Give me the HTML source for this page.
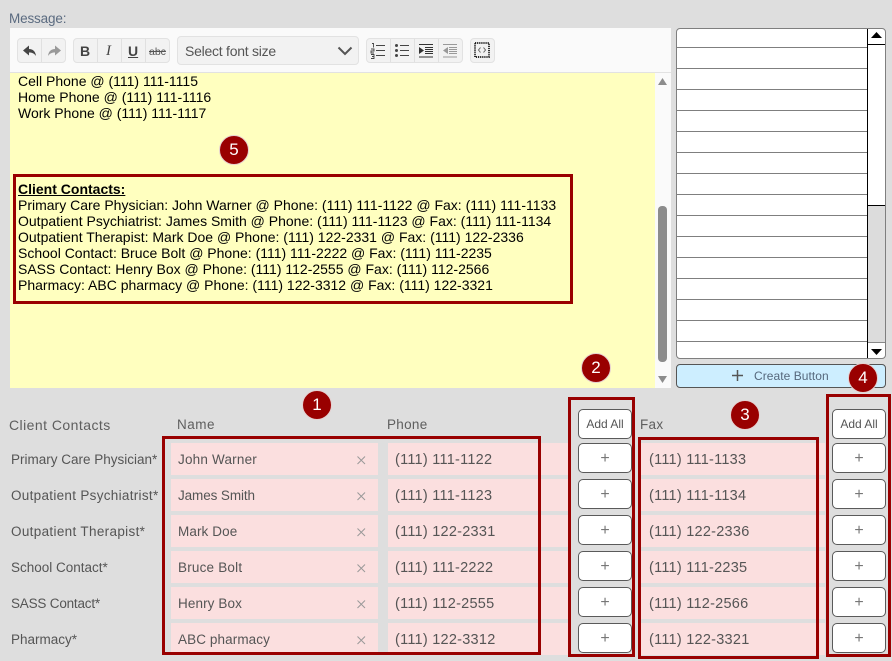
<!DOCTYPE html>
<html><head><meta charset="utf-8"><style>
html,body{margin:0;padding:0;width:892px;height:661px;overflow:hidden;background:#dedede}
body{position:relative;font-family:"Liberation Sans",sans-serif;color:#555}
div,span,svg{position:absolute;box-sizing:border-box;white-space:nowrap}
.t{font-size:13.5px;line-height:16px;color:#555}
.ph{font-size:14.5px;letter-spacing:.25px}
.pink{background:#fbdfdf;height:32px}
.btn{background:#fff;border:1px solid #5a5a5a;border-radius:5px;width:54px;height:30px;text-align:center;font-size:12px;line-height:28px;color:#555}
.pl{font-size:16px;line-height:30px;color:#777}
.red{border:3.5px solid #990000}
.c{width:30px;height:30px;border-radius:50%;background:#990000;border:1px solid #e6d0d0;color:#fff;text-align:center;font-size:17px;line-height:28px}
.m{font-size:14px;line-height:16px;color:#000;left:18px}
.grp{background:#f2f2f2;border:1px solid #e2e2e2;border-radius:4px;height:25px;top:38px}
.sep{width:1px;background:#e0e0e0;top:0;height:23px}
.hl{left:677px;width:190px;height:1px;background:#7f7f7f}
.x{left:357px}
</style></head><body>

<div class="t" style="left:9px;top:11px;color:#5b6b80;letter-spacing:-.15px">Message:</div>

<div style="left:10px;top:28px;width:661px;height:360px;background:#fafafa"></div>
<div style="left:10px;top:72px;width:661px;height:1px;background:#e2e2e2"></div>
<div style="left:10px;top:73px;width:645px;height:315px;background:#ffffbf"></div>

<div class="grp" style="left:17px;width:49px"><div class="sep" style="left:23px"></div>
<svg style="left:4px;top:4px" width="16" height="16" viewBox="0 0 16 16"><path d="M7 2.500L1 7.500l6 5V9.500c3 0 5 .7 7 3.500-.5-4.500-3-7-7-7z" fill="#444"/></svg>
<svg style="left:28px;top:4px" width="16" height="16" viewBox="0 0 16 16"><path d="M9 2.500l6 5-6 5V9.500c-3 0-5 .7-7 3.500 .5-4.500 3-7 7-7z" fill="#999"/></svg></div>

<div class="grp" style="left:73px;width:97px"><div class="sep" style="left:23px"></div><div class="sep" style="left:47px"></div><div class="sep" style="left:71px"></div>
<div style="left:6px;top:4px;font:bold 14px/16px 'Liberation Sans',sans-serif;color:#444">B</div>
<div style="left:32px;top:4px;font:italic 15px/16px 'Liberation Serif',serif;color:#444">I</div>
<div style="left:54px;top:4px;font:bold 14px/16px 'Liberation Sans',sans-serif;color:#444;text-decoration:underline">U</div>
<div style="left:75px;top:5px;font:10.500px/16px 'Liberation Sans',sans-serif;color:#555;text-decoration:line-through">abc</div></div>

<div style="left:177px;top:36px;width:182px;height:29px;background:#f2f2f2;border:1px solid #e2e2e2;border-radius:4px"></div>
<div class="t" style="left:185px;top:43px;font-size:14px;letter-spacing:-.25px;color:#555">Select font size</div>
<svg style="left:337px;top:46px" width="16" height="10" viewBox="0 0 16 10"><path d="M1.500 1.500L8 8l6.500-6.500" fill="none" stroke="#555" stroke-width="2"/></svg>

<div class="grp" style="left:366px;width:97px"><div class="sep" style="left:23px"></div><div class="sep" style="left:47px"></div><div class="sep" style="left:71px"></div>
<svg style="left:3px;top:3px" width="18" height="18" viewBox="0 0 18 18"><path d="M6 3.500h9M6 8.500h9M6 13.500h9" stroke="#444" fill="none"/><path d="M2 1.500h1.500v4M1 7h3v2H1v2h3M1 12.500h3v4H1M2 14.500h2" stroke="#444" fill="none" stroke-width=".9"/></svg>
<svg style="left:27px;top:3px" width="18" height="18" viewBox="0 0 18 18"><circle cx="2.500" cy="3.500" r="1.500" fill="#444"/><circle cx="2.500" cy="8.500" r="1.500" fill="#444"/><circle cx="2.500" cy="13.500" r="1.500" fill="#444"/><path d="M6 3.500h9M6 8.500h9M6 13.500h9" stroke="#444" fill="none"/></svg>
<svg style="left:51px;top:3px" width="18" height="18" viewBox="0 0 18 18"><path d="M1 2.500h14M7 5.500h8M7 7.500h8M7 9.500h8M7 11.500h8M1 15h14" stroke="#333" fill="none"/><path d="M1 5l5 3.500L1 12z" fill="#333"/></svg>
<svg style="left:73px;top:3px" width="18" height="18" viewBox="0 0 18 18"><path d="M3 2.500h14M9 5.500h8M9 7.500h8M9 9.500h8M9 11.500h8M3 15h14" stroke="#999" fill="none"/><path d="M8 5L3 8.500 8 12z" fill="#999"/></svg></div>

<div class="grp" style="left:470px;width:25px">
<svg style="left:3px;top:3px" width="17" height="17" viewBox="0 0 17 17"><rect x="1" y="1" width="14" height="14" fill="none" stroke="#111" stroke-width="1.700" stroke-dasharray="1.200 .9"/><path d="M6.500 5.500L4.500 8l2 2.500M9.500 5.500l2 2.500-2 2.500" fill="none" stroke="#666"/></svg></div>

<div class="m" style="top:73px">Cell Phone @ (111) 111-1115</div>
<div class="m" style="top:89px">Home Phone @ (111) 111-1116</div>
<div class="m" style="top:105px">Work Phone @ (111) 111-1117</div>
<div class="m" style="top:181px;font-weight:bold;text-decoration:underline">Client Contacts:</div>
<div class="m" style="top:197px">Primary Care Physician: John Warner @ Phone: (111) 111-1122 @ Fax: (111) 111-1133</div>
<div class="m" style="top:213px">Outpatient Psychiatrist: James Smith @ Phone: (111) 111-1123 @ Fax: (111) 111-1134</div>
<div class="m" style="top:229px">Outpatient Therapist: Mark Doe @ Phone: (111) 122-2331 @ Fax: (111) 122-2336</div>
<div class="m" style="top:245px">School Contact: Bruce Bolt @ Phone: (111) 111-2222 @ Fax: (111) 111-2235</div>
<div class="m" style="top:261px">SASS Contact: Henry Box @ Phone: (111) 112-2555 @ Fax: (111) 112-2566</div>
<div class="m" style="top:277px">Pharmacy: ABC pharmacy @ Phone: (111) 122-3312 @ Fax: (111) 122-3321</div>
<div class="red" style="left:13px;top:174px;width:560px;height:130px"></div>

<svg style="left:657px;top:77px" width="11" height="9" viewBox="0 0 11 9"><path d="M5.500 1L10 8H1z" fill="#8c8c8c"/></svg>
<div style="left:658px;top:206px;width:9px;height:156px;border-radius:4px;background:#8c8c8c"></div>
<svg style="left:657px;top:375px" width="11" height="9" viewBox="0 0 11 9"><path d="M1 1h9L5.500 8z" fill="#8c8c8c"/></svg>

<div style="left:676px;top:28px;width:210px;height:331px;background:#fff;border:1px solid #7f7f7f;border-radius:4px"></div>
<div class="hl" style="top:47px"></div><div class="hl" style="top:68px"></div><div class="hl" style="top:89px"></div><div class="hl" style="top:110px"></div><div class="hl" style="top:131px"></div><div class="hl" style="top:152px"></div><div class="hl" style="top:173px"></div><div class="hl" style="top:194px"></div><div class="hl" style="top:215px"></div><div class="hl" style="top:236px"></div><div class="hl" style="top:257px"></div><div class="hl" style="top:278px"></div><div class="hl" style="top:299px"></div><div class="hl" style="top:320px"></div><div class="hl" style="top:341px"></div>
<div style="left:868px;top:205px;width:17px;height:137px;background:#dcdcdc"></div>
<div style="left:867px;top:29px;width:1px;height:329px;background:#000"></div>
<div style="left:868px;top:44px;width:17px;height:1px;background:#000"></div>
<div style="left:868px;top:205px;width:17px;height:1px;background:#000"></div>
<div style="left:868px;top:342px;width:17px;height:1px;background:#888"></div>
<svg style="left:871px;top:32px" width="11" height="7" viewBox="0 0 11 7"><path d="M5.500 0L11 6H0z" fill="#000"/></svg>
<svg style="left:871px;top:349px" width="11" height="7" viewBox="0 0 11 7"><path d="M0 0h11L5.500 6z" fill="#000"/></svg>

<div style="left:676px;top:364px;width:210px;height:24px;background:#cdeeff;border:1px solid #555;border-radius:4px"></div>
<svg style="left:732px;top:370px" width="11" height="11" viewBox="0 0 11 11"><path d="M5.500 0v11M0 5.500h11" stroke="#555" stroke-width="1.500"/></svg>
<div class="t" style="left:754px;top:368px;font-size:12px;letter-spacing:.05px;color:#56687c">Create Button</div>

<div class="t" style="left:9px;top:417px;font-size:14px;letter-spacing:.45px;color:#5e5e5e">Client Contacts</div>
<div class="t" style="left:177px;top:417px;letter-spacing:.5px;color:#5e5e5e">Name</div>
<div class="t" style="left:387px;top:417px;letter-spacing:.3px;color:#5e5e5e">Phone</div>
<div class="t" style="left:640px;top:417px;letter-spacing:.3px;color:#5e5e5e">Fax</div>

<div class="pink" style="left:171px;top:443px;width:207px"></div><div class="pink" style="left:388px;top:443px;width:180px"></div><div class="pink" style="left:640px;top:443px;width:185px"></div>
<div class="pink" style="left:171px;top:479px;width:207px"></div><div class="pink" style="left:388px;top:479px;width:180px"></div><div class="pink" style="left:640px;top:479px;width:185px"></div>
<div class="pink" style="left:171px;top:515px;width:207px"></div><div class="pink" style="left:388px;top:515px;width:180px"></div><div class="pink" style="left:640px;top:515px;width:185px"></div>
<div class="pink" style="left:171px;top:551px;width:207px"></div><div class="pink" style="left:388px;top:551px;width:180px"></div><div class="pink" style="left:640px;top:551px;width:185px"></div>
<div class="pink" style="left:171px;top:587px;width:207px"></div><div class="pink" style="left:388px;top:587px;width:180px"></div><div class="pink" style="left:640px;top:587px;width:185px"></div>
<div class="pink" style="left:171px;top:623px;width:207px"></div><div class="pink" style="left:388px;top:623px;width:180px"></div><div class="pink" style="left:640px;top:623px;width:185px"></div>

<div class="t" style="left:11px;top:452px">Primary Care Physician*</div>
<div class="t" style="left:11px;top:488px;letter-spacing:.3px">Outpatient Psychiatrist*</div>
<div class="t" style="left:11px;top:524px;letter-spacing:.33px">Outpatient Therapist*</div>
<div class="t" style="left:11px;top:560px">School Contact*</div>
<div class="t" style="left:11px;top:596px;letter-spacing:-.2px">SASS Contact*</div>
<div class="t" style="left:11px;top:632px">Pharmacy*</div>

<div class="t" style="left:178px;top:452px;letter-spacing:.2px">John Warner</div><svg class="x" style="top:456px" width="9" height="9" viewBox="0 0 9 9"><path d="M.5.500l7.500 7.500M8 .5L.5 8" stroke="#999" fill="none"/></svg><div class="t ph" style="left:395px;top:452px">(111) 111-1122</div><div class="t ph" style="left:649px;top:452px">(111) 111-1133</div>
<div class="t" style="left:178px;top:488px;letter-spacing:-.1px">James Smith</div><svg class="x" style="top:492px" width="9" height="9" viewBox="0 0 9 9"><path d="M.5.500l7.500 7.500M8 .5L.5 8" stroke="#999" fill="none"/></svg><div class="t ph" style="left:395px;top:488px">(111) 111-1123</div><div class="t ph" style="left:649px;top:488px">(111) 111-1134</div>
<div class="t" style="left:178px;top:524px;letter-spacing:.1px">Mark Doe</div><svg class="x" style="top:528px" width="9" height="9" viewBox="0 0 9 9"><path d="M.5.500l7.500 7.500M8 .5L.5 8" stroke="#999" fill="none"/></svg><div class="t ph" style="left:395px;top:524px">(111) 122-2331</div><div class="t ph" style="left:649px;top:524px">(111) 122-2336</div>
<div class="t" style="left:178px;top:560px;letter-spacing:.2px">Bruce Bolt</div><svg class="x" style="top:564px" width="9" height="9" viewBox="0 0 9 9"><path d="M.5.500l7.500 7.500M8 .5L.5 8" stroke="#999" fill="none"/></svg><div class="t ph" style="left:395px;top:560px">(111) 111-2222</div><div class="t ph" style="left:649px;top:560px">(111) 111-2235</div>
<div class="t" style="left:178px;top:596px;letter-spacing:.1px">Henry Box</div><svg class="x" style="top:600px" width="9" height="9" viewBox="0 0 9 9"><path d="M.5.500l7.500 7.500M8 .5L.5 8" stroke="#999" fill="none"/></svg><div class="t ph" style="left:395px;top:596px">(111) 112-2555</div><div class="t ph" style="left:649px;top:596px">(111) 112-2566</div>
<div class="t" style="left:178px;top:632px;letter-spacing:.1px">ABC pharmacy</div><svg class="x" style="top:636px" width="9" height="9" viewBox="0 0 9 9"><path d="M.5.500l7.500 7.500M8 .5L.5 8" stroke="#999" fill="none"/></svg><div class="t ph" style="left:395px;top:632px">(111) 122-3312</div><div class="t ph" style="left:649px;top:632px">(111) 122-3321</div>

<div class="btn" style="left:578px;top:409px">Add All</div>
<div class="btn pl" style="left:578px;top:443px">+</div><div class="btn pl" style="left:578px;top:479px">+</div><div class="btn pl" style="left:578px;top:515px">+</div><div class="btn pl" style="left:578px;top:551px">+</div><div class="btn pl" style="left:578px;top:587px">+</div><div class="btn pl" style="left:578px;top:623px">+</div>
<div class="btn" style="left:832px;top:409px">Add All</div>
<div class="btn pl" style="left:832px;top:443px">+</div><div class="btn pl" style="left:832px;top:479px">+</div><div class="btn pl" style="left:832px;top:515px">+</div><div class="btn pl" style="left:832px;top:551px">+</div><div class="btn pl" style="left:832px;top:587px">+</div><div class="btn pl" style="left:832px;top:623px">+</div>

<div class="red" style="left:162px;top:436px;width:379px;height:219px"></div>
<div class="red" style="left:568px;top:397px;width:67px;height:260px"></div>
<div class="red" style="left:638px;top:437px;width:181px;height:222px"></div>
<div class="red" style="left:826px;top:394px;width:65px;height:263px"></div>

<div class="c" style="left:302px;top:390px">1</div>
<div class="c" style="left:581px;top:353px">2</div>
<div class="c" style="left:730px;top:400px">3</div>
<div class="c" style="left:848px;top:363px">4</div>
<div class="c" style="left:219px;top:135px">5</div>

</body></html>
